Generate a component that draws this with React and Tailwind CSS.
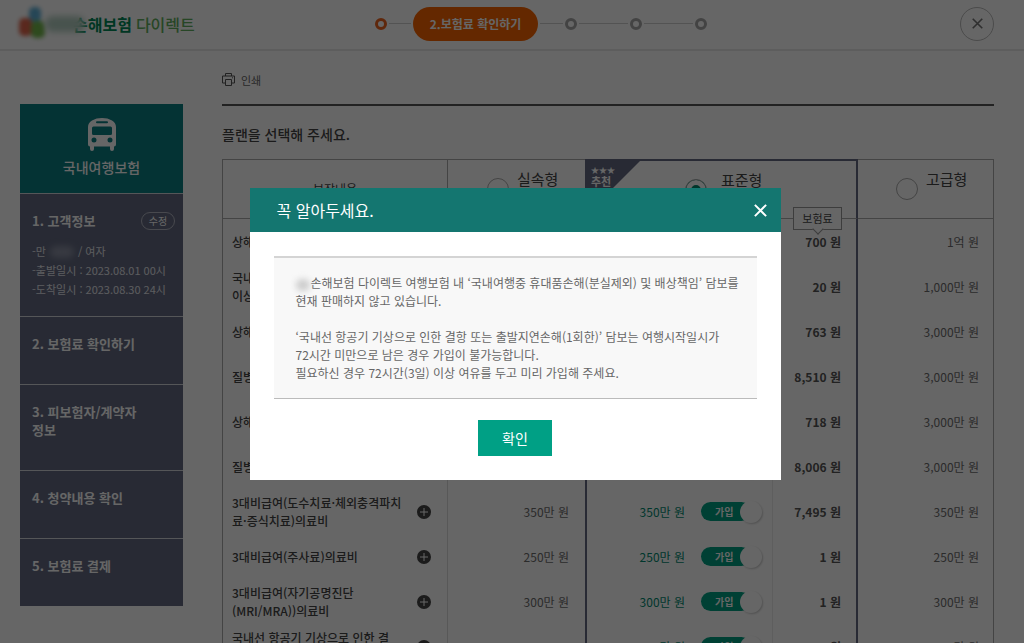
import { useState } from "react";

const steps = ["1.고객정보", "2.보험료 확인하기", "3.계약자 정보", "4.청약내용 확인", "5.보험료 결제"];

const coverages = [
  { name: "상해사망", basic: "5,000만 원", standard: "1억 원", price: "700 원", premium: "1억 원" },
  { name: "국내여행\n이상 담보", basic: "500만 원", standard: "1,000만 원", price: "20 원", premium: "1,000만 원" },
  { name: "상해급여", basic: "1,000만 원", standard: "3,000만 원", price: "763 원", premium: "3,000만 원" },
  { name: "질병급여", basic: "1,000만 원", standard: "3,000만 원", price: "8,510 원", premium: "3,000만 원" },
  { name: "상해비급여", basic: "1,000만 원", standard: "3,000만 원", price: "718 원", premium: "3,000만 원" },
  { name: "질병비급여", basic: "1,000만 원", standard: "3,000만 원", price: "8,006 원", premium: "3,000만 원" },
  { name: "3대비급여(도수치료·체외충격파치\n료·증식치료)의료비", basic: "350만 원", standard: "350만 원", price: "7,495 원", premium: "350만 원" },
  { name: "3대비급여(주사료)의료비", basic: "250만 원", standard: "250만 원", price: "1 원", premium: "250만 원" },
  { name: "3대비급여(자기공명진단\n(MRI/MRA))의료비", basic: "300만 원", standard: "300만 원", price: "1 원", premium: "300만 원" },
  { name: "국내선 항공기 기상으로 인한 결\n항 또는 출발지연손해", basic: "-", standard: "5만 원", price: "1 원", premium: "5만 원" },
];

function BusIcon() {
  return (
    <svg viewBox="0 0 30 33" className="h-[33px] w-[30px]" aria-hidden="true">
      <path
        fill="#fff"
        fillRule="evenodd"
        d="M5 2.5C8 .8 11 0 15 0s7 .8 10 2.5c2.500 1.400 4 3.500 4 6.500v17.500a2 2 0 0 1-2 2V31a2 2 0 0 1-4 0v-2.500H7V31a2 2 0 0 1-4 0v-2.500a2 2 0 0 1-2-2V9c0-3 1.500-5.100 4-6.500zM10 3.200a1 1 0 0 0 0 2h10a1 1 0 0 0 0-2zM6.500 8.500A1.500 1.500 0 0 0 5 10v5.500A1.500 1.500 0 0 0 6.500 17h17a1.500 1.500 0 0 0 1.500-1.500V10a1.500 1.500 0 0 0-1.500-1.500zM7 19.500a2.500 2.500 0 1 0 0 5 2.500 2.500 0 0 0 0-5zm16 0a2.500 2.500 0 1 0 0 5 2.500 2.500 0 0 0 0-5z"
      />
    </svg>
  );
}

function CloseIcon({ className }) {
  return (
    <svg viewBox="0 0 12 12" className={className} fill="none" stroke="currentColor" aria-hidden="true">
      <path d="M.8.8l10.400 10.400M11.200.8L.8 11.200" strokeWidth="1.800" />
    </svg>
  );
}

function Header() {
  return (
    <header className="flex h-[51px] items-center border-b-2 border-[#e8e8e8] pb-[2px] pr-[30px] pl-5">
      <a href="#home" className="flex w-[355px] shrink-0 items-center text-base leading-6">
        <svg viewBox="0 0 53 44" className="h-11 w-[53px] overflow-visible" aria-hidden="true">
          <g className="blur-[2px]">
            <rect x="9" y="5" width="12" height="15" rx="5" fill="#5fb0d8" />
            <rect x="-1" y="16" width="13" height="18" rx="5" fill="#e0654c" />
            <rect x="11" y="19" width="14" height="17" rx="5" fill="#74b84c" />
          </g>
        </svg>
        <span className="relative font-bold text-[#008a58]">
          손해보험
          <span className="absolute top-1 -left-7 h-4 w-10 rounded-full bg-[#b4cfc2] blur-[3px]" />
        </span>
        <span className="ml-1 font-medium text-[#62b060]">다이렉트</span>
      </a>

      <ol className="flex shrink-0 items-center">
        {steps.map((step, i) => (
          <li key={step} className="flex items-center">
            {i === 1 ? (
              <span className="flex h-[34px] w-[125px] items-center justify-center rounded-full bg-[#fb6500] text-xs font-bold text-white">
                {step}
              </span>
            ) : (
              <span
                title={step}
                className={`size-3 rounded-full border-[3px] ${i === 0 ? "border-[#ee6420]" : "border-[#a8a8a8]"}`}
              />
            )}
            {i < steps.length - 1 && (
              <span className={`mx-[2px] h-px bg-[#d0d0d0] ${i === 0 ? "w-[22px]" : i === 1 ? "w-[23px]" : "w-[49px]"}`} />
            )}
          </li>
        ))}
      </ol>

      <button
        type="button"
        aria-label="닫기"
        className="ml-auto flex size-[34px] items-center justify-center rounded-full border border-[#bbb] text-[#777]"
      >
        <CloseIcon className="size-[11px]" />
      </button>
    </header>
  );
}

function SideMenu() {
  return (
    <aside className="mt-[53px] flex w-[163px] shrink-0 flex-col gap-px self-start bg-[#d4d6dc] text-[13px] leading-[18px] font-bold text-white">
      <div className="flex h-[89px] flex-col items-center bg-[#0b7f83] pt-3.5">
        <BusIcon />
        <p className="mt-1.5 text-sm font-medium">국내여행보험</p>
      </div>
      <section className="h-[122px] bg-[#646a82] px-3 pt-[18px]">
        <div className="flex items-center justify-between">
          <h2>1. 고객정보</h2>
          <button
            type="button"
            className="-mr-1 h-[18px] w-[34px] rounded-full border border-[#b4b7c4] text-[10px] leading-4 font-normal"
          >
            수정
          </button>
        </div>
        <ul className="mt-3 text-[11px] leading-[19px] font-normal text-[#e4e6ec]">
          <li className="flex items-center">
            -만
            <span className="mx-1 h-3 w-6 rounded-full bg-[#8b90a3] blur-[3px]" />
            / 여자
          </li>
          <li>-출발일시 : 2023.08.01 00시</li>
          <li>-도착일시 : 2023.08.30 24시</li>
        </ul>
      </section>
      <h2 className="h-[67px] bg-[#646a82] px-3 pt-[18px]">2. 보험료 확인하기</h2>
      <h2 className="h-[85px] bg-[#646a82] px-3 pt-[18px]">
        3. 피보험자/계약자
        <br />
        정보
      </h2>
      <h2 className="h-[67px] bg-[#646a82] px-3 pt-[18px]">4. 청약내용 확인</h2>
      <h2 className="h-[67px] bg-[#646a82] px-3 pt-[18px]">5. 보험료 결제</h2>
    </aside>
  );
}

function PlanRadio({ label, value, plan, onChange, className }) {
  return (
    <label className={`flex items-center ${className}`}>
      <input
        type="radio"
        name="plan"
        value={value}
        checked={plan === value}
        onChange={() => onChange(value)}
        className="size-[22px] appearance-none rounded-full border border-[#aaa] bg-white checked:bg-[#00876c] checked:shadow-[inset_0_0_0_5px_#fff]"
      />
      <span className="pb-5 text-[15px] leading-5 font-normal">{label}</span>
    </label>
  );
}

function JoinSwitch({ name }) {
  return (
    <label className="relative flex h-[22px] w-[61px] items-center">
      <input type="checkbox" defaultChecked aria-label={name} className="peer sr-only" />
      <span className="h-[19px] w-[50px] rounded-full bg-[#00a183] pl-3.5 text-[10px] leading-[19px] font-bold text-white">
        가입
      </span>
      <span className="absolute top-0 right-0 size-[22px] rounded-full bg-white shadow-[1px_1px_2px_rgba(0,0,0,0.2)]" />
    </label>
  );
}

function PlanTable() {
  const [plan, setPlan] = useState("standard");

  return (
    <table className="w-full table-fixed border-separate border-spacing-0 text-xs text-[#6c6c6c]">
      <colgroup>
        <col className="w-[225px]" />
        <col className="w-[138px]" />
        <col className="w-[187px]" />
        <col className="w-[86px]" />
        <col className="w-[136px]" />
      </colgroup>
      <thead>
        <tr className="h-[60px] text-[#444]">
          <th className="border border-r-0 border-[#aaa] font-normal">보장내용</th>
          <th className="border border-r-0 border-[#aaa] p-0">
            <PlanRadio label="실속형" value="basic" plan={plan} onChange={setPlan} className="gap-2 pl-[39px]" />
          </th>
          <th colSpan={2} className="relative border-2 border-b border-[#646982] border-b-[#aaa] p-0">
            <svg viewBox="0 0 53 53" className="absolute top-0 left-0 size-[53px]" aria-hidden="true">
              <path d="M0 0h53L0 53z" fill="#646982" />
            </svg>
            <span className="absolute top-1 left-1 text-[8px] leading-[10px] text-white">★★★</span>
            <span className="absolute top-3 left-1 text-[11px] leading-4 font-bold text-white">추천</span>
            <PlanRadio label="표준형" value="standard" plan={plan} onChange={setPlan} className="gap-3.5 pl-[98px]" />
            <span className="absolute right-3.5 -bottom-3 z-10 flex h-[23px] w-[49px] items-center justify-center border border-[#999] bg-white text-[11px] font-normal">
              보험료
              <span className="absolute -bottom-1 size-2 rotate-45 border-r border-b border-[#999] bg-white" />
            </span>
          </th>
          <th className="border border-l-0 border-[#aaa] p-0">
            <PlanRadio label="고급형" value="premium" plan={plan} onChange={setPlan} className="gap-2 pl-[38px]" />
          </th>
        </tr>
      </thead>
      <tbody>
        {coverages.map((c) => (
          <tr key={c.name} className="h-[45px]">
            <th scope="row" className="border-l border-[#aaa] p-0 pr-4 pl-[9px] text-left font-medium text-[#444]">
              <div className="flex h-[45px] items-center justify-between">
                <span className="leading-[18px] whitespace-pre">{c.name}</span>
                <button
                  type="button"
                  aria-label="보장 상세보기"
                  className="flex size-3.5 shrink-0 items-center justify-center rounded-full bg-[#444] text-white"
                >
                  <svg viewBox="0 0 8 8" className="size-2" stroke="currentColor" aria-hidden="true">
                    <path d="M4 0v8M0 4h8" />
                  </svg>
                </button>
              </div>
            </th>
            <td className="border-l border-[#ddd] p-0 pr-4 text-right">{c.basic}</td>
            <td className="border-l-2 border-[#646982] p-0 pr-2.5">
              <div className="flex items-center justify-end gap-4 text-[#008a70]">
                {c.standard}
                <JoinSwitch name={c.name} />
              </div>
            </td>
            <td className="border-r-2 border-l border-r-[#646982] border-l-[#ececec] p-0 pr-[15px] text-right font-bold text-[#555]">
              {c.price}
            </td>
            <td className="border-r border-[#aaa] p-0 pr-3.5 text-right">{c.premium}</td>
          </tr>
        ))}
      </tbody>
    </table>
  );
}

function NoticeModal({ onClose }) {
  return (
    <div className="fixed inset-0 z-20 flex items-start justify-center bg-black/60 pt-[188px] pl-1.5">
      <div role="dialog" aria-modal="true" aria-labelledby="notice-title" className="w-[531px] bg-white">
        <div className="flex h-11 items-center justify-between bg-[#147670] pr-3.5 pl-[27px] text-white">
          <h2 id="notice-title" className="text-base">꼭 알아두세요.</h2>
          <button type="button" aria-label="닫기" onClick={onClose}>
            <CloseIcon className="size-[13px]" />
          </button>
        </div>
        <div className="flex flex-col items-center px-6 pt-6 pb-6">
          <div className="w-full border-t-2 border-b border-t-[#d4d4d4] border-b-[#bbb] bg-[#f8f8f8] py-4 pl-[22px] text-xs leading-[18px] whitespace-nowrap text-[#666]">
            <p>
              <span className="mr-px inline-block h-3 w-3.5 rounded-full bg-[#ccc] align-middle blur-[3px]" />
              손해보험 다이렉트 여행보험 내 ‘국내여행중 휴대품손해(분실제외) 및 배상책임’ 담보를
              <br />
              현재 판매하지 않고 있습니다.
            </p>
            <p className="mt-[18px]">
              ‘국내선 항공기 기상으로 인한 결항 또는 출발지연손해(1회한)’ 담보는 여행시작일시가
              <br />
              72시간 미만으로 남은 경우 가입이 불가능합니다.
              <br />
              필요하신 경우 72시간(3일) 이상 여유를 두고 미리 가입해 주세요.
            </p>
          </div>
          <button type="button" onClick={onClose} className="mt-[21px] h-9 w-[74px] bg-[#00a085] text-sm text-white">
            확인
          </button>
        </div>
      </div>
    </div>
  );
}

function App() {
  const [open, setOpen] = useState(true);

  return (
    <div lang="ko" className="h-screen overflow-hidden bg-white font-['Noto_Sans_CJK_KR','Noto_Sans',sans-serif] text-[#444]">
      <Header />
      <div className="flex gap-[39px] pr-[30px] pl-5">
        <SideMenu />
        <main className="min-w-0 flex-1">
          <div className="flex h-[55px] items-center border-b-2 border-[#555] pt-1">
            <button type="button" className="flex items-center gap-1.5 text-[11px] leading-4 text-[#666]">
              <svg viewBox="0 0 13 13" className="size-[13px]" fill="none" stroke="#555" aria-hidden="true">
                <path d="M3.500 3V.5h6V3M3.500 10h-3V3h12v7h-3M3.500 6.500h6v6h-6zM10 4.800h1" />
              </svg>
              인쇄
            </button>
          </div>
          <h1 className="mt-[18px] mb-[15px] text-sm leading-5 font-medium">플랜을 선택해 주세요.</h1>
          <PlanTable />
        </main>
      </div>
      {open && <NoticeModal onClose={() => setOpen(false)} />}
    </div>
  );
}

export default App;
